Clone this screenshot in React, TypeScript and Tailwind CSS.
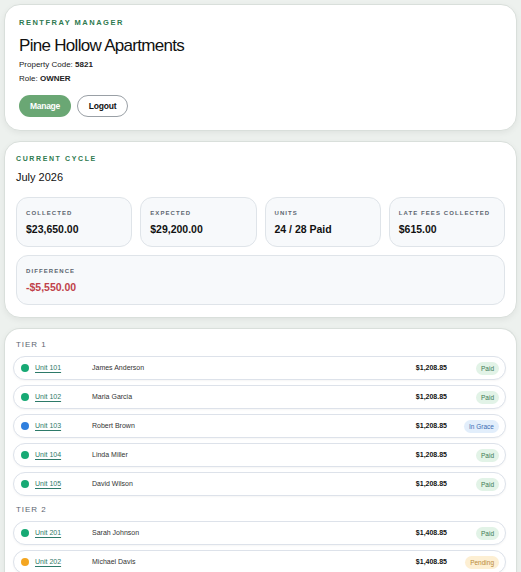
import React from 'react';

type Status = 'paid' | 'grace' | 'pending';

interface Unit {
  unit: string;
  tenant: string;
  amount: string;
  status: Status;
}

const tiers: { name: string; units: Unit[] }[] = [
  {
    name: 'TIER 1',
    units: [
      { unit: 'Unit 101', tenant: 'James Anderson', amount: '$1,208.85', status: 'paid' },
      { unit: 'Unit 102', tenant: 'Maria Garcia', amount: '$1,208.85', status: 'paid' },
      { unit: 'Unit 103', tenant: 'Robert Brown', amount: '$1,208.85', status: 'grace' },
      { unit: 'Unit 104', tenant: 'Linda Miller', amount: '$1,208.85', status: 'paid' },
      { unit: 'Unit 105', tenant: 'David Wilson', amount: '$1,208.85', status: 'paid' },
    ],
  },
  {
    name: 'TIER 2',
    units: [
      { unit: 'Unit 201', tenant: 'Sarah Johnson', amount: '$1,408.85', status: 'paid' },
      { unit: 'Unit 202', tenant: 'Michael Davis', amount: '$1,408.85', status: 'pending' },
    ],
  },
];

const dotClass: Record<Status, string> = {
  paid: 'bg-[#17a974]',
  grace: 'bg-[#2f7fde]',
  pending: 'bg-[#f4a621]',
};

const badgeClass: Record<Status, string> = {
  paid: 'bg-[#e2f3e7] text-[#3d7a55]',
  grace: 'bg-[#e2eefb] text-[#3b6cb2]',
  pending: 'bg-[#fdefd3] text-[#b8893a]',
};

const badgeLabel: Record<Status, string> = {
  paid: 'Paid',
  grace: 'In Grace',
  pending: 'Pending',
};

const StatBox: React.FC<{ label: string; value: string; valueClass?: string }> = ({
  label,
  value,
  valueClass = 'text-[#111]',
}) => (
  <div className="h-[50px] rounded-[12px] border border-[#dfe4e9] bg-[#f7f9fb] px-[9px] pt-[10px]">
    <div className="text-[6px] font-bold tracking-[0.18em] text-[#5d6670] leading-[10px]">{label}</div>
    <div className={`mt-[4px] text-[10.5px] font-bold leading-[14px] ${valueClass}`}>{value}</div>
  </div>
);

const App: React.FC = () => {
  return (
    <div
      className="min-h-[572px] bg-[#edf1ee] px-[4px] pt-[4px] text-[#111]"
      style={{ fontFamily: '"Liberation Sans", Arial, sans-serif' }}
    >
      {/* Header card */}
      <div className="rounded-[16px] border border-[#d9dfdb] bg-white px-[14px] pt-[13px] pb-[13px] shadow-[0_2px_6px_rgba(0,0,0,0.06)]">
        <div className="text-[7.5px] font-bold tracking-[0.2em] text-[#2f7a4f] leading-[10px]">RENTFRAY MANAGER</div>
        <div className="mt-[7px] text-[17px] leading-[22px] tracking-[-0.7px] text-[#111]">Pine Hollow Apartments</div>
        <div className="mt-[1px] text-[8px] leading-[14px] text-[#222]">
          Property Code: <span className="font-bold">5821</span>
        </div>
        <div className="text-[8px] leading-[14px] text-[#222]">
          Role: <span className="font-bold">OWNER</span>
        </div>
        <div className="mt-[9px] flex gap-[6px]">
          <button className="h-[22px] w-[52px] rounded-full bg-[#6aa774] text-[8.5px] font-bold tracking-[-0.3px] text-white">
            Manage
          </button>
          <button className="h-[22px] w-[51px] rounded-full border border-[#9aa0a6] bg-white text-[8.5px] font-bold tracking-[-0.2px] text-[#111]">
            Logout
          </button>
        </div>
      </div>

      {/* Current cycle card */}
      <div className="mt-[10px] rounded-[16px] border border-[#d9dfdb] bg-white px-[11px] pt-[12px] pb-[12px] shadow-[0_2px_6px_rgba(0,0,0,0.06)]">
        <div className="text-[7px] font-bold tracking-[0.23em] text-[#2f7a4f] leading-[10px]">CURRENT CYCLE</div>
        <div className="mt-[6px] text-[11px] leading-[14px] text-[#111]">July 2026</div>
        <div className="mt-[13px] grid grid-cols-4 gap-[8px]">
          <StatBox label="COLLECTED" value="$23,650.00" />
          <StatBox label="EXPECTED" value="$29,200.00" />
          <StatBox label="UNITS" value="24 / 28 Paid" />
          <StatBox label="LATE FEES COLLECTED" value="$615.00" />
        </div>
        <div className="mt-[8px]">
          <StatBox label="DIFFERENCE" value="-$5,550.00" valueClass="text-[#c0424a]" />
        </div>
      </div>

      {/* Units card */}
      <div className="mt-[10px] rounded-t-[16px] border border-b-0 border-[#d9dfdb] bg-white pl-[8px] pr-[10px] pt-[10px] pb-[8px] shadow-[0_2px_6px_rgba(0,0,0,0.06)]">
        {tiers.map((tier, ti) => (
          <div key={tier.name} className={ti > 0 ? 'mt-[8px]' : ''}>
            <div className="px-[3px] text-[8px] tracking-[0.12em] text-[#5d6670] leading-[12px]">{tier.name}</div>
            <div className="mt-[5px] flex flex-col gap-[5px]">
              {tier.units.map((u) => (
                <div
                  key={u.unit}
                  className="flex h-[24px] items-center rounded-[12px] border border-[#dde2ea] bg-white pl-[7px] pr-[6px] shadow-[0_1px_2px_rgba(0,0,0,0.04)]"
                >
                  <span className={`h-[8px] w-[8px] shrink-0 rounded-full ${dotClass[u.status]}`} />
                  <a href="#" className="ml-[6px] w-[57px] shrink-0 text-[7px] text-[#2d7a69] underline underline-offset-2">
                    {u.unit}
                  </a>
                  <span className="flex-1 text-[7px] text-[#333]">{u.tenant}</span>
                  <span className="text-[7px] font-bold text-[#111]">{u.amount}</span>
                  <span className="flex w-[52px] justify-end">
                    <span className={`rounded-full px-[5px] py-[3px] text-[6.5px] leading-[7px] ${badgeClass[u.status]}`}>
                      {badgeLabel[u.status]}
                    </span>
                  </span>
                </div>
              ))}
            </div>
          </div>
        ))}
      </div>
    </div>
  );
};

export default App;
